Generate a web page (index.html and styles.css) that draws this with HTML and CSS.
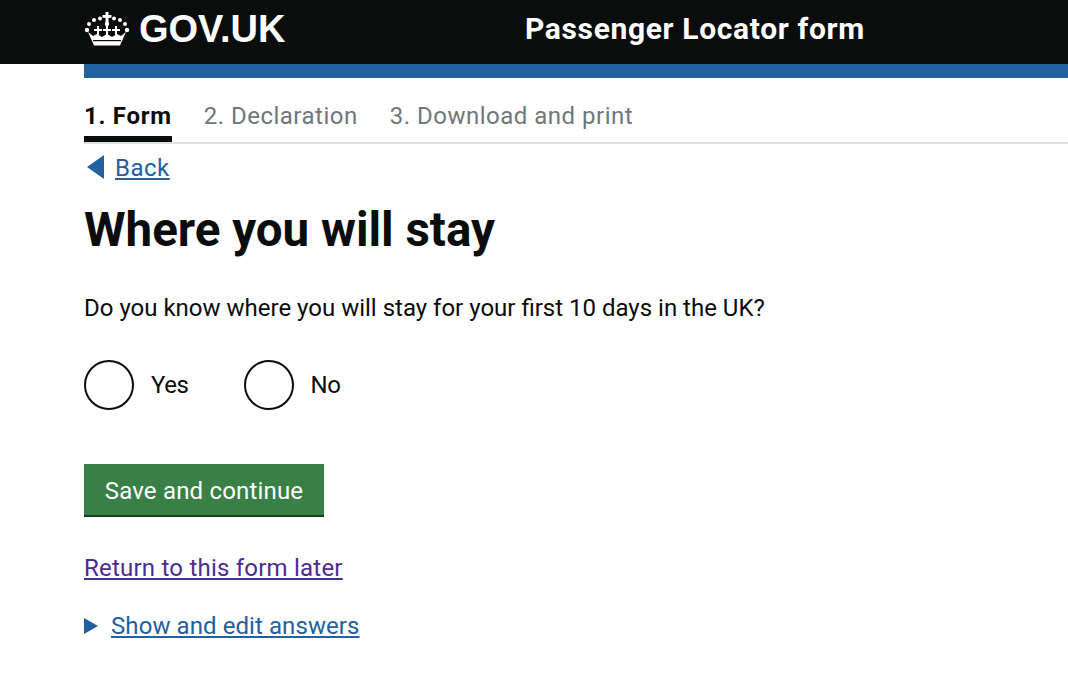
FILE: index.html
```html
<!DOCTYPE html>
<html lang="en">
<head>
<meta charset="utf-8">
<title>Where you will stay</title>
<link rel="stylesheet" href="styles.css">
</head>
<body>
<header class="site-header">
  <div class="logo">
    <svg class="crown" width="46" height="36" viewBox="0 0 46 36" aria-hidden="true">
      <g fill="#fff">
        <circle cx="3" cy="20" r="2.200"/><circle cx="43" cy="20" r="2.200"/>
        <circle cx="5" cy="14" r="2"/><circle cx="41" cy="14" r="2"/>
        <circle cx="10" cy="10" r="2"/><circle cx="36" cy="10" r="2"/>
        <circle cx="16" cy="8.500" r="2"/><circle cx="30" cy="8.500" r="2"/>
        <rect x="21.500" y="2" width="3" height="11"/>
        <rect x="18.500" y="5" width="9" height="2.800"/>
        <circle cx="23" cy="14" r="2.200"/>
        <rect x="22" y="15" width="2" height="12"/>
        <rect x="19" y="19" width="8" height="2"/>
        <rect x="13" y="16" width="2" height="11"/>
        <rect x="10" y="19" width="8" height="2"/>
        <rect x="31" y="16" width="2" height="11"/>
        <rect x="28" y="19" width="8" height="2"/>
        <path d="M4 22l5 4 4-2 5 3 5-3 5 3 5-3 4 2 5-4-6 13.500H10z"/>
      </g>
      <rect x="9" y="30" width="28" height="1.200" fill="#0b0c0c"/>
    </svg>
    <span class="logo-text">GOV.UK</span>
  </div>
  <div class="service-name">Passenger Locator form</div>
</header>
<div class="page">
  <div class="blue-bar"></div>
  <nav class="steps">
    <span class="step step-active">1. Form</span>
    <span class="step">2. Declaration</span>
    <span class="step">3. Download and print</span>
  </nav>
  <main class="content">
    <a class="back" href="#"><svg class="back-arrow" width="17" height="24" viewBox="0 0 17 24" aria-hidden="true"><path d="M17 0v24L0 12z"/></svg><span class="link back-link">Back</span></a>
    <h1 class="title">Where you will stay</h1>
    <p class="question">Do you know where you will stay for your first 10 days in the UK?</p>
    <div class="radios">
      <label class="radio"><span class="radio-circle"></span>Yes</label>
      <label class="radio"><span class="radio-circle"></span>No</label>
    </div>
    <button class="submit" type="button">Save and continue</button>
    <a class="return link" href="#">Return to this form later</a>
    <div class="details"><svg class="details-arrow" width="14" height="16" viewBox="0 0 14 16" aria-hidden="true"><path d="M0 0l14 8L0 16z"/></svg><a class="link show-link" href="#">Show and edit answers</a></div>
  </main>
</div>
</body>
</html>
```
FILE: styles.css
```css
* { box-sizing: border-box; }
html, body { margin: 0; padding: 0; }
body {
  background: #fff;
  color: #0b0c0c;
  font-family: Roboto, "Liberation Sans", sans-serif;
  height: 684px;
  overflow: hidden;
}
.site-header {
  background: #0b0c0c;
  color: #fff;
  height: 64px;
  display: flex;
  align-items: flex-start;
  padding-left: 84px;
}
.logo { display: flex; align-items: flex-start; width: 441px; padding-top: 10px; }
.crown { margin-right: 9px; }
.logo-text {
  font-family: "Liberation Sans", sans-serif;
  font-weight: 700;
  font-size: 38px;
  line-height: 38px;
}
.service-name {
  font-weight: 700;
  font-size: 30px;
  letter-spacing: 0.650px;
  line-height: 40px;
  padding-top: 9px;
}
.page { padding-left: 84px; }
.blue-bar { height: 14px; background: #22609f; }
.steps {
  display: flex;
  gap: 32px;
  height: 66px;
  border-bottom: 2px solid #dee0e2;
  padding-top: 22px;
}
.step {
  color: #6f777b;
  font-size: 24px;
  letter-spacing: 0.500px;
  line-height: 32px;
  height: 42px;
}
.step-active {
  color: #0b0c0c;
  font-weight: 700;
  letter-spacing: 0.700px;
  border-bottom: 6px solid #0b0c0c;
}
.back { display: flex; align-items: center; gap: 11px; height: 46px; text-decoration: none; }
.back-arrow { fill: #22609f; margin-left: 3px; }
.link { color: #22609f; text-decoration: underline; font-size: 24px; }
.back-link { letter-spacing: 0.500px; padding-top: 2px; }
.title { font-size: 47.500px; line-height: 50px; font-weight: 700; margin: 15px 0 0; }
.question { font-size: 24px; line-height: 32px; margin: 37px 0 0; }
.radios { display: flex; gap: 55px; margin-top: 36px; }
.radio {
  display: flex;
  align-items: center;
  gap: 17px;
  font-size: 24px;
  letter-spacing: -0.400px;
  line-height: 50px;
}
.radio-circle {
  display: block;
  width: 50px; height: 50px;
  border: 2px solid #0b0c0c;
  border-radius: 50%;
}
.submit {
  display: block;
  margin-top: 54px;
  width: 240px; height: 53px;
  background: #3a8046;
  border: 0;
  border-bottom: 2px solid #1b3f22;
  color: #fff;
  font-family: inherit;
  font-size: 24px;
  letter-spacing: 0.180px;
  padding: 3px 0 0;
}
.return { display: block; margin-top: 35px; color: #4c2c92; letter-spacing: 0.220px; line-height: 32px; }
.details { display: flex; align-items: center; gap: 13px; margin-top: 26px; height: 32px; }
.details-arrow { fill: #22609f; }
.show-link { letter-spacing: 0.080px; }
```
